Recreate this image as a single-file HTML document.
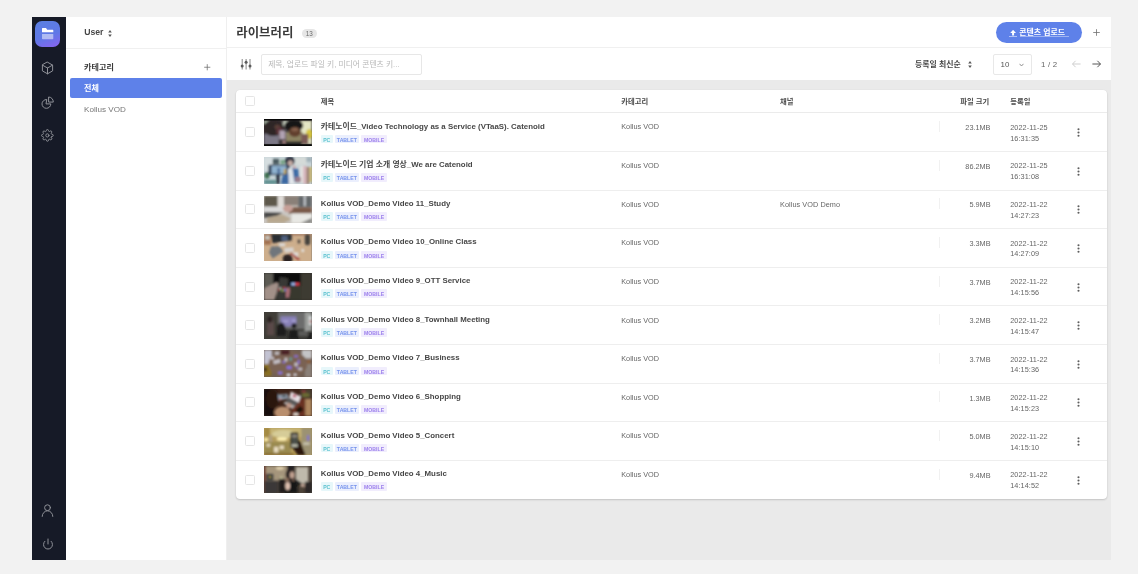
<!DOCTYPE html>
<html lang="ko">
<head>
<meta charset="utf-8">
<title>라이브러리</title>
<style>
*{box-sizing:border-box;margin:0;padding:0}
html,body{width:1138px;height:574px;overflow:hidden;background:#f2f2f2}
body{font-family:"Liberation Sans","Noto Sans CJK KR",sans-serif;color:#333;position:relative;font-size:7.3px;line-height:1}
.app{position:absolute;left:32px;top:17px;width:1079px;height:542.5px;background:#fff;overflow:hidden;will-change:transform}
/* dark icon rail */
.rail{position:absolute;left:0;top:0;width:33.5px;height:100%;background:#161a27}
.rail .on{position:absolute;left:3px;top:4.25px;width:25.3px;height:25.3px;border-radius:7px;background:linear-gradient(160deg,#5b80e2 0%,#5f78e6 55%,#8a63f0 100%)}
.rail svg{position:absolute;overflow:visible}
/* category side panel */
.side{position:absolute;left:33.5px;top:0;width:161.5px;height:100%;background:#fff;border-right:1px solid #efefef}
.side .user{position:absolute;left:18.7px;top:11.1px;font-size:8.7px;font-weight:bold;color:#484848;white-space:nowrap}
.side .user i{font-style:normal;display:inline-block;width:5px}
.side .hr{position:absolute;left:0;top:30.5px;width:100%;height:1px;background:#f0f0f0}
.side .cat{position:absolute;left:0;top:0;width:0;height:0}
.side .plus{position:absolute;left:138.5px;top:47px;width:6.5px;height:6.5px}
.side .sel{position:absolute;left:4.75px;top:60.6px;width:152px;height:20.5px;border-radius:2px;background:#5e81e9}
.side .item{position:absolute;left:18.5px;top:88.75px;font-size:8.1px;color:#777;white-space:nowrap}
.ud{position:absolute;width:4px;height:7px}
.hg{position:absolute;display:block;overflow:visible}
.tx{position:absolute;display:block;white-space:nowrap;line-height:1;font-family:"Liberation Sans","Noto Sans CJK KR",sans-serif}
/* main */
.main{position:absolute;left:195px;top:0;width:884px;height:100%;background:#eaeaea}
.head{position:absolute;left:0;top:0;width:100%;height:31px;background:#fff;border-bottom:1px solid #f0f0f0}
.head h1{position:absolute;left:0;top:0;width:0;height:0;font-size:12.4px}
.head .cnt{position:absolute;left:74.5px;top:11.75px;width:15.5px;height:9.25px;border-radius:5px;background:#e6e6e6;color:#6a6a6a;font-size:6.3px;text-align:center;line-height:9.6px}
.head .up{position:absolute;left:768.75px;top:5.25px;width:86.5px;height:20.75px;border-radius:10.5px;background:#5e81e9;color:#fff;font-size:7.9px;font-weight:bold;white-space:nowrap;overflow:hidden}
.head .up>svg:first-child{position:absolute;left:13.05px;top:7.35px;width:8.2px;height:7.6px}
.head .up i{position:absolute;left:23.8px;top:13.5px;width:49.5px;height:.6px;background:rgba(255,255,255,.4)}
.head .add{position:absolute;left:866px;top:12px;width:7px;height:7px}
.tool{position:absolute;left:0;top:31px;width:100%;height:31.5px;background:#fff}
.tool .flt{position:absolute;left:14px;top:11.1px;width:11px;height:11px;overflow:visible}
.tool .q{position:absolute;left:34.25px;top:6.25px;width:160.5px;height:20.25px;border:1px solid #e7e7e7;border-radius:2px;overflow:hidden}
.tool .sort{position:absolute;left:0;top:0;width:0;height:0}
.tool .pp{position:absolute;left:766px;top:6.25px;width:39px;height:20.25px;border:1px solid #e8e8e8;border-radius:2px;color:#555;font-size:7.6px;padding:6.1px 0 0 6.5px;font-size:7.9px}
.tool .pp svg{position:absolute;left:25px;top:8px;width:5px;height:4px}
.tool .pg{position:absolute;left:814px;top:12.5px;font-size:7.9px;color:#666;white-space:nowrap;letter-spacing:.2px}
.tool .ar{position:absolute;top:12.4px;width:9px;height:8px}
/* table card */
.card{position:absolute;left:9px;top:72.75px;width:870.75px;height:409.25px;background:#fff;border-radius:4px;box-shadow:0 1px 2px rgba(0,0,0,.16),0 0 1px rgba(0,0,0,.08);overflow:hidden}
.th{position:relative;height:23.5px;border-bottom:1px solid #ebebeb;font-weight:bold;color:#444;font-size:7.3px}
.th span{position:absolute;top:7.1px;white-space:nowrap}
.cb{position:absolute;left:9px;width:10px;height:10px;border:1px solid #e5e5e5;border-radius:1.5px;background:#fff}
.row{position:relative;height:38.64px;border-bottom:1px solid #eee}
.row:last-child{border-bottom:0}
.row .cb{top:13.8px}
.row .tn{position:absolute;left:28.25px;top:5.35px;width:47.75px;height:27px;overflow:hidden;background:#555}
.row .tn svg{display:block;width:47.75px;height:27px}
.row .t{position:absolute;left:84.75px;top:9.35px;font-size:7.87px;font-weight:bold;color:#474747;white-space:nowrap}
.row .tags{position:absolute;left:84.75px;top:21.6px;height:8.6px;white-space:nowrap;font-size:0}
.row .tags b{display:inline-block;height:8.6px;line-height:10.5px;font-size:5.2px;text-align:center;overflow:hidden;margin-right:2.2px;border-radius:1px;vertical-align:top}
.pc{width:12px;background:#e7f7fa;color:#5cc2cf}.tb{width:23.9px;background:#ebeffd;color:#7693ec}.mb{width:26px;background:#f1edfd;color:#9b7fec}
.row .c{position:absolute;left:385.25px;top:10.2px;color:#666;white-space:nowrap}
.row .ch{position:absolute;left:544px;top:10.2px;color:#666;white-space:nowrap;letter-spacing:.06px}
.row .sp{position:absolute;left:702.5px;top:7.75px;width:1px;height:11px;background:#f1f1f1}
.row .sz{position:absolute;right:116.25px;top:10.9px;color:#666;white-space:nowrap}
.row .d{position:absolute;left:774.25px;top:11.3px;color:#666;white-space:nowrap;line-height:10.75px;margin-top:-1.7px;letter-spacing:.06px}
.row .k{position:absolute;left:840.6px;top:14.8px;width:3px;height:9px}
</style>
</head>
<body>
<svg width="0" height="0" style="position:absolute"><defs><filter id="bl" x="-20%" y="-20%" width="140%" height="140%"><feGaussianBlur stdDeviation="1"/></filter></defs></svg>
<div class="app">
  <div class="rail">
    <div class="on"></div>
    <svg style="left:9.9px;top:11.1px" width="11.3" height="11.2" viewBox="0 0 11.3 11.2"><path d="M0 .6 Q0 0 .6 0 H4 L5.2 1.7 H10.7 Q11.3 1.7 11.3 2.3 V4.3 H0Z" fill="#fff"/><path d="M0 6.1 H11.3 V10.5 Q11.3 11.2 10.6 11.2 H.7 Q0 11.2 0 10.5Z" fill="#fff" fill-opacity=".5"/></svg>
    <svg style="left:9.2px;top:43.9px" width="13" height="14" viewBox="-6.5 -7 13 14" stroke="#8f9198" fill="none" stroke-linecap="round" stroke-linejoin="round" stroke-width="1"><path d="M0 -5.8 L5.1 -2.9 V2.9 L0 5.8 L-5.1 2.9 V-2.9Z M-5.1 -2.9 L0 0 L5.1 -2.9 M0 0 V5.8"/></svg>
    <svg style="left:8px;top:78px" width="16" height="16" viewBox="0 0 16 16" stroke="#8f9198" fill="none" stroke-linecap="round" stroke-linejoin="round" stroke-width="1"><path d="M6.4 4.5 A4.4 4.4 0 1 0 10.8 8.9 H6.4Z"/><path d="M8.6 6.7 V2 A4.7 4.7 0 0 1 13.3 6.7Z"/></svg>
    <svg style="left:9.4px;top:112.3px" width="12.8" height="12.8" viewBox="0 0 24 24" stroke="#8f9198" fill="none" stroke-linecap="round" stroke-linejoin="round" stroke-width="1.8"><circle cx="12" cy="12" r="3"/><path d="M19.4 15a1.65 1.65 0 0 0 .33 1.82l.06.06a2 2 0 0 1 0 2.83 2 2 0 0 1-2.83 0l-.06-.06a1.65 1.65 0 0 0-1.82-.33 1.65 1.65 0 0 0-1 1.51V21a2 2 0 0 1-2 2 2 2 0 0 1-2-2v-.09A1.65 1.65 0 0 0 9 19.4a1.65 1.65 0 0 0-1.82.33l-.06.06a2 2 0 0 1-2.83 0 2 2 0 0 1 0-2.83l.06-.06a1.65 1.65 0 0 0 .33-1.82 1.65 1.65 0 0 0-1.51-1H3a2 2 0 0 1-2-2 2 2 0 0 1 2-2h.09A1.65 1.65 0 0 0 4.6 9a1.65 1.65 0 0 0-.33-1.82l-.06-.06a2 2 0 0 1 0-2.83 2 2 0 0 1 2.83 0l.06.06a1.65 1.65 0 0 0 1.82.33H9a1.65 1.65 0 0 0 1-1.51V3a2 2 0 0 1 2-2 2 2 0 0 1 2 2v.09a1.65 1.65 0 0 0 1 1.51 1.65 1.65 0 0 0 1.82-.33l.06-.06a2 2 0 0 1 2.83 0 2 2 0 0 1 0 2.83l-.06.06a1.65 1.65 0 0 0-.33 1.82V9a1.65 1.65 0 0 0 1.51 1H21a2 2 0 0 1 2 2 2 2 0 0 1-2 2h-.09a1.65 1.65 0 0 0-1.51 1z"/></svg>
    <svg style="left:9px;top:486.5px" width="13" height="14" viewBox="0 0 13 14" stroke="#8f9198" fill="none" stroke-linecap="round" stroke-linejoin="round" stroke-width="1"><circle cx="6.5" cy="3.7" r="2.9"/><path d="M1.2 12.4 A5.3 5.6 0 0 1 11.8 12.4"/></svg>
    <svg style="left:9.6px;top:520.6px" width="12" height="12" viewBox="0 0 24 24" stroke="#8f9198" fill="none" stroke-linecap="round" stroke-linejoin="round" stroke-width="2"><path d="M18.36 6.64a9 9 0 1 1-12.73 0"/><line x1="12" y1="2" x2="12" y2="12"/></svg>
  </div>
  <div class="side">
    <div class="user">User</div>
    <svg class="ud" style="left:42.5px;top:12.5px" viewBox="0 0 4 7"><path d="M2 0 L3.8 2.6 H.2Z M2 7 L3.8 4.4 H.2Z" fill="#555"/></svg>
    <div class="hr"></div>
    <div class="cat"><span class="tx" style="left:18.6px;top:46.8px;font-size:8.1px;font-weight:bold;color:#3a3a3a">카테고리</span></div>
    <svg class="plus" viewBox="0 0 7 7"><path d="M3.5 .2V6.8M.2 3.5H6.8" stroke="#707070" stroke-width=".85" fill="none"/></svg>
    <div class="sel"><span class="tx" style="left:13.85px;top:6.95px;font-size:8.1px;font-weight:bold;color:#fff">전체</span></div>
    <div class="item">Kollus VOD</div>
  </div>
  <div class="main">
    <div class="head">
      <h1><span class="tx" style="left:9.3px;top:9.95px;font-size:12.4px;font-weight:bold;color:#3a3a3a">라이브러리</span></h1>
      <div class="cnt">13</div>
      <div class="up"><svg viewBox="0 0 8.2 7.6"><path d="M4.1 -.2 L7 3 H5.1 V5.5 H3.1 V3 H1.2Z M0 6.6 H8.2 V7.7 H0Z" fill="#fff"/></svg><span class="tx" style="left:23.6px;top:6.75px;font-size:7.9px;font-weight:bold;color:#fff">콘텐츠 업로드</span><i></i></div>
      <svg class="add" viewBox="0 0 7 7"><path d="M3.5 .2V6.8M.2 3.5H6.8" stroke="#707070" stroke-width=".8" fill="none"/></svg>
    </div>
    <div class="tool">
      <svg class="flt" viewBox="0 0 11 11"><path d="M1.2 0V10.5M5.1 0V10.5M9 0V10.5" stroke="#707070" stroke-width=".85" fill="none"/><g fill="#5a5a5a"><circle cx="1.2" cy="6.9" r="1.5"/><circle cx="5.1" cy="3.3" r="1.5"/><circle cx="9" cy="6.9" r="1.5"/></g></svg>
      <div class="q"><span class="tx" style="left:5.9px;top:6px;font-size:7.8px;color:#b8b8b8">제목, 업로드 파일 키, 미디어 콘텐츠 키...</span></div>
      <div class="sort"><span class="tx" style="left:688.1px;top:13.25px;font-size:7.9px;font-weight:bold;color:#444">등록일 최신순</span></div>
      <svg class="ud" style="left:741px;top:13.2px" viewBox="0 0 4 7"><path d="M2 0 L3.8 2.6 H.2Z M2 7 L3.8 4.4 H.2Z" fill="#555"/></svg>
      <div class="pp">10<svg viewBox="0 0 5 4"><path d="M.5 .8 L2.5 3 L4.5 .8" stroke="#777" stroke-width=".8" fill="none"/></svg></div>
      <div class="pg">1 / 2</div>
      <svg class="ar" style="left:845px" viewBox="0 0 9 8"><path d="M8.6 4H.6M3.6 .8L.5 4L3.6 7.2" stroke="#c9c9c9" stroke-width=".9" fill="none"/></svg>
      <svg class="ar" style="left:864.75px" viewBox="0 0 9 8"><path d="M.4 4H8.4M5.4 .8L8.5 4L5.4 7.2" stroke="#444" stroke-width=".9" fill="none"/></svg>
    </div>
    <div class="card">
      <div class="th">
        <div class="cb" style="top:6px"></div>
        <span style="left:84.75px;top:7.8px;color:#484848">제목</span>
        <span style="left:385.25px;top:7.8px;color:#484848">카테고리</span>
        <span style="left:544px;top:7.8px;color:#484848">채널</span>
        <span style="left:724.3px;top:7.8px;color:#484848">파일 크기</span>
        <span style="left:774.25px;top:7.8px;color:#484848">등록일</span>
      </div>
      <div class="row">
        <div class="cb"></div>
        <div class="tn"><svg viewBox="0 0 48 27" preserveAspectRatio="none"><rect width="48" height="27" fill="#3a3436"/><g filter="url(#bl)"><rect x="0" y="1.5" width="5" height="6" fill="#b9c9b6"/><rect x="19" y="1.5" width="5" height="6" fill="#c8d0c0"/><rect x="37" y="1.5" width="11" height="24" fill="#e4e6c4"/><ellipse cx="45.5" cy="15" rx="3.5" ry="5" fill="#d6c63e"/><rect x="0" y="15" width="15" height="11" fill="#7c7886"/><ellipse cx="9.5" cy="9" rx="10.5" ry="8" fill="#2e2628"/><ellipse cx="13.5" cy="8" rx="3" ry="2.2" fill="#5a4038"/><ellipse cx="15.5" cy="12" rx="3.5" ry="4" fill="#5a3338"/><rect x="15.5" y="11.5" width="6" height="9" fill="#b0a2b2"/><rect x="22" y="13" width="17" height="10" fill="#8d8463"/><rect x="37.5" y="15" width="7" height="10" fill="#7a5a56"/><ellipse cx="30" cy="6.5" rx="9.5" ry="5.5" fill="#191717"/><ellipse cx="31" cy="13" rx="6" ry="5" fill="#62402f"/><ellipse cx="31" cy="10.5" rx="3.5" ry="1.8" fill="#86604c"/><rect x="22" y="22.5" width="16" height="3" fill="#222"/><ellipse cx="20" cy="23" rx="1.6" ry="1.6" fill="#c49494"/></g><rect width="48" height="1.5" fill="#080808"/><rect y="25.2" width="48" height="1.8" fill="#080808"/></svg></div>
        <div class="t">카테노이드_Video Technology as a Service (VTaaS). Catenoid</div>
        <div class="tags"><b class="pc">PC</b><b class="tb">TABLET</b><b class="mb">MOBILE</b></div>
        <div class="c">Kollus VOD</div>
        <div class="ch"></div>
        <div class="sp"></div>
        <div class="sz">23.1MB</div>
        <div class="d">2022-11-25<br>16:31:35</div>
        <svg class="k" viewBox="0 0 3 9"><circle cx="1.5" cy="1.2" r="1.05" fill="#5e5e5e"/><circle cx="1.5" cy="4.5" r="1.05" fill="#5e5e5e"/><circle cx="1.5" cy="7.8" r="1.05" fill="#5e5e5e"/></svg>
      </div>
      <div class="row">
        <div class="cb"></div>
        <div class="tn"><svg viewBox="0 0 48 27" preserveAspectRatio="none"><rect width="48" height="27" fill="#c6d2d6"/><g filter="url(#bl)"><rect x="0" y="0" width="8" height="14" fill="#d6dee0"/><rect x="31" y="0" width="12" height="8" fill="#d4dad8"/><rect x="42.6" y="0" width="5.4" height="5" fill="#a3b2ba"/><rect x="8.8" y="1.9" width="6.2" height="5.3" fill="#4a5a5e"/><ellipse cx="18.8" cy="5" rx="2.5" ry="2.2" fill="#76a384"/><ellipse cx="3" cy="18.5" rx="2.6" ry="3.2" fill="#3f7050"/><rect x="0" y="23" width="12" height="4" fill="#5f9090"/><rect x="4.4" y="7.8" width="21.3" height="10.1" rx="1" fill="#2b3a52"/><rect x="7.5" y="9" width="15" height="7.8" fill="#8fb2cf"/><rect x="13.5" y="11" width="2.5" height="6" fill="#4a6a98"/><rect x="20" y="12" width="2" height="5" fill="#c8a848"/><rect x="12.5" y="17.5" width="3" height="9.5" fill="#1a2030"/><ellipse cx="26" cy="4" rx="5" ry="4.5" fill="#2a3040"/><ellipse cx="26.5" cy="6" rx="2.5" ry="2.7" fill="#c4aaa2"/><rect x="24" y="11.5" width="7" height="15.5" fill="#e2e6ea"/><path d="M17 27 L18.5 19 L24.5 16.5 L25 27Z" fill="#3a68a2"/><path d="M28.5 11 L34.5 12 L35.5 24 L30.5 25Z" fill="#3d6ca6"/><ellipse cx="30.5" cy="10" rx="1.5" ry="1.5" fill="#d0a8a8"/><rect x="36.5" y="9" width="3" height="17" fill="#e6e2e0"/><rect x="39.5" y="9" width="3.2" height="18" fill="#d8b4ba"/><rect x="42.8" y="10" width="2.6" height="17" fill="#9a7c66"/><rect x="46" y="10" width="2" height="15" fill="#c9b056"/><rect x="31" y="20" width="6" height="5" fill="#9a7a88"/></g></svg></div>
        <div class="t">카테노이드 기업 소개 영상_We are Catenoid</div>
        <div class="tags"><b class="pc">PC</b><b class="tb">TABLET</b><b class="mb">MOBILE</b></div>
        <div class="c">Kollus VOD</div>
        <div class="ch"></div>
        <div class="sp"></div>
        <div class="sz">86.2MB</div>
        <div class="d">2022-11-25<br>16:31:08</div>
        <svg class="k" viewBox="0 0 3 9"><circle cx="1.5" cy="1.2" r="1.05" fill="#5e5e5e"/><circle cx="1.5" cy="4.5" r="1.05" fill="#5e5e5e"/><circle cx="1.5" cy="7.8" r="1.05" fill="#5e5e5e"/></svg>
      </div>
      <div class="row">
        <div class="cb"></div>
        <div class="tn"><svg viewBox="0 0 48 27" preserveAspectRatio="none"><rect width="48" height="27" fill="#c9c5c0"/><g filter="url(#bl)"><rect x="0" y="0" width="13.8" height="10.7" fill="#5d584c"/><rect x="13.8" y="0" width="6.5" height="14" fill="#e0dcd8"/><rect x="20" y="0" width="14.5" height="9.4" fill="#8a8078"/><rect x="34.5" y="0" width="13.5" height="11" fill="#63676b"/><rect x="40" y="0" width="2" height="10" fill="#c8ccd0"/><rect x="0" y="10.7" width="20" height="5.6" fill="#dadada"/><rect x="25" y="11.3" width="23" height="6.2" fill="#7a5a48"/><ellipse cx="24" cy="12.5" rx="5" ry="3.5" fill="#c8a098"/><path d="M0 16 L19 16.5 L13 20 L0 22Z" fill="#4a4a48"/><path d="M3 22 L18 18.5 L27.6 23 L20 27 L3 27Z" fill="#b8a890"/><rect x="27.6" y="17.5" width="20.4" height="9.5" fill="#e8e8e4"/><path d="M37 27 L48 22 L48 27Z" fill="#858583"/></g></svg></div>
        <div class="t">Kollus VOD_Demo Video 11_Study</div>
        <div class="tags"><b class="pc">PC</b><b class="tb">TABLET</b><b class="mb">MOBILE</b></div>
        <div class="c">Kollus VOD</div>
        <div class="ch">Kollus VOD Demo</div>
        <div class="sp"></div>
        <div class="sz">5.9MB</div>
        <div class="d">2022-11-22<br>14:27:23</div>
        <svg class="k" viewBox="0 0 3 9"><circle cx="1.5" cy="1.2" r="1.05" fill="#5e5e5e"/><circle cx="1.5" cy="4.5" r="1.05" fill="#5e5e5e"/><circle cx="1.5" cy="7.8" r="1.05" fill="#5e5e5e"/></svg>
      </div>
      <div class="row">
        <div class="cb"></div>
        <div class="tn"><svg viewBox="0 0 48 27" preserveAspectRatio="none"><rect width="48" height="27" fill="#cdae8c"/><g filter="url(#bl)"><rect x="0" y="0" width="48" height="1.2" fill="#8a6050"/><rect x="0" y="1.3" width="6.9" height="9.4" fill="#a07050"/><rect x="1.3" y="1.9" width="4.4" height="3.8" fill="#c8c8c0"/><path d="M6.9 0 L27.9 0 L27.9 6.5 L8.5 9.3Z" fill="#2a2e30"/><rect x="17.5" y="1.9" width="6.3" height="5" fill="#506080"/><rect x="15" y="9.4" width="6.3" height="2.8" fill="#dcdcdc"/><path d="M7.2 12.5 L15.4 12.2 L19.4 17.6 L8.8 24.5 L5 18.8Z" fill="#70767c"/><path d="M20 14 L29.5 13.2 L30 17.5 L21 18.8Z" fill="#d8d4d0"/><rect x="28.8" y="18.2" width="5.7" height="4.4" fill="#e0dcd8"/><path d="M25.7 19 L27.5 18.5 L36.4 25.2 L34 26Z" fill="#a03030"/><ellipse cx="23.8" cy="25" rx="5" ry="4.8" fill="#2a2020"/><rect x="41" y="0.3" width="5.4" height="11" rx="2.4" fill="#45423e"/><rect x="33.9" y="5.6" width="2.5" height="3.8" fill="#504840"/><ellipse cx="39" cy="16.5" rx="1.4" ry="1.8" fill="#e4e4e4"/></g></svg></div>
        <div class="t">Kollus VOD_Demo Video 10_Online Class</div>
        <div class="tags"><b class="pc">PC</b><b class="tb">TABLET</b><b class="mb">MOBILE</b></div>
        <div class="c">Kollus VOD</div>
        <div class="ch"></div>
        <div class="sp"></div>
        <div class="sz">3.3MB</div>
        <div class="d">2022-11-22<br>14:27:09</div>
        <svg class="k" viewBox="0 0 3 9"><circle cx="1.5" cy="1.2" r="1.05" fill="#5e5e5e"/><circle cx="1.5" cy="4.5" r="1.05" fill="#5e5e5e"/><circle cx="1.5" cy="7.8" r="1.05" fill="#5e5e5e"/></svg>
      </div>
      <div class="row">
        <div class="cb"></div>
        <div class="tn"><svg viewBox="0 0 48 27" preserveAspectRatio="none"><rect width="48" height="27" fill="#2c2c28"/><g filter="url(#bl)"><rect x="0" y="0" width="9.4" height="16" fill="#5c5a52"/><rect x="37" y="0" width="11" height="27" fill="#3c3a31"/><rect x="9.4" y="0" width="27.6" height="12.8" fill="#090909"/><rect x="25" y="12.8" width="12" height="14.2" fill="#38382f"/><rect x="27.3" y="9.7" width="4" height="2.8" fill="#6a98e8"/><rect x="28" y="10.3" width="2.4" height="1.4" fill="#d0e0ff"/><rect x="31.3" y="9.7" width="4.4" height="2.8" fill="#e04050"/><path d="M0 15.5 L12.5 9.3 L15 11 L12.5 21 L10.5 27 L0 27Z" fill="#a29088"/><path d="M16 4 L24.5 5.5 L22.5 27 L13 27 L14 14Z" fill="#393936"/><rect x="15.2" y="14.4" width="2" height="1.8" fill="#cfc8c0"/><rect x="14.2" y="15.8" width="1.6" height="2" fill="#c03040"/><rect x="16.4" y="16.2" width="1.8" height="2" fill="#40a060"/><rect x="18.5" y="16.5" width="1.6" height="2" fill="#c8b030"/><rect x="20.2" y="15.8" width="2" height="2.3" fill="#3070d0"/><rect x="19" y="14.2" width="2.4" height="1.5" fill="#d04050"/><path d="M22 15 L26 14.5 L26 19 L25 24.8 L22 24.8Z" fill="#a86c74"/></g></svg></div>
        <div class="t">Kollus VOD_Demo Video 9_OTT Service</div>
        <div class="tags"><b class="pc">PC</b><b class="tb">TABLET</b><b class="mb">MOBILE</b></div>
        <div class="c">Kollus VOD</div>
        <div class="ch"></div>
        <div class="sp"></div>
        <div class="sz">3.7MB</div>
        <div class="d">2022-11-22<br>14:15:56</div>
        <svg class="k" viewBox="0 0 3 9"><circle cx="1.5" cy="1.2" r="1.05" fill="#5e5e5e"/><circle cx="1.5" cy="4.5" r="1.05" fill="#5e5e5e"/><circle cx="1.5" cy="7.8" r="1.05" fill="#5e5e5e"/></svg>
      </div>
      <div class="row">
        <div class="cb"></div>
        <div class="tn"><svg viewBox="0 0 48 27" preserveAspectRatio="none"><rect width="48" height="27" fill="#3c3c38"/><g filter="url(#bl)"><rect x="13.8" y="0" width="27" height="17" fill="#6c6c6c"/><rect x="0" y="0" width="13.8" height="27" fill="#403e38"/><rect x="16.6" y="4.4" width="16" height="10" fill="#8880b8"/><rect x="19" y="8.5" width="5.6" height="1.6" fill="#aaa4d6"/><rect x="28" y="7.8" width="4" height="1.8" fill="#aaa4d6"/><rect x="40.8" y="0" width="7.2" height="19" fill="#9a9c9a"/><rect x="45" y="4" width="3" height="9" fill="#d8dcdc"/><rect x="46" y="8" width="2" height="3" fill="#c08888"/><path d="M3 23 L3.5 8 Q6 3 8.5 6 L10 12 L10 23Z" fill="#5a4a48"/><ellipse cx="5.8" cy="7.5" rx="2.6" ry="3.2" fill="#2a2424"/><path d="M12.5 24 L13 14 Q17 8 20 12 L22.5 18 L22 24Z" fill="#1e1c1c"/><circle cx="30.2" cy="13.8" r="2.6" fill="#1e1c1c"/><path d="M24.5 27 L25.5 19 Q30 15.5 34 19 L35 27Z" fill="#1e1c1c"/><rect x="34.5" y="19" width="9.4" height="5" fill="#5a5a58"/><path d="M42.6 27 L47 20 L48 20 L48 27Z" fill="#1a1a1a"/></g></svg></div>
        <div class="t">Kollus VOD_Demo Video 8_Townhall Meeting</div>
        <div class="tags"><b class="pc">PC</b><b class="tb">TABLET</b><b class="mb">MOBILE</b></div>
        <div class="c">Kollus VOD</div>
        <div class="ch"></div>
        <div class="sp"></div>
        <div class="sz">3.2MB</div>
        <div class="d">2022-11-22<br>14:15:47</div>
        <svg class="k" viewBox="0 0 3 9"><circle cx="1.5" cy="1.2" r="1.05" fill="#5e5e5e"/><circle cx="1.5" cy="4.5" r="1.05" fill="#5e5e5e"/><circle cx="1.5" cy="7.8" r="1.05" fill="#5e5e5e"/></svg>
      </div>
      <div class="row">
        <div class="cb"></div>
        <div class="tn"><svg viewBox="0 0 48 27" preserveAspectRatio="none"><rect width="48" height="27" fill="#705f54"/><g filter="url(#bl)"><rect x="0" y="0" width="8" height="14" fill="#c2c2d2"/><rect x="38" y="0" width="10" height="8.5" fill="#c4c4c6"/><rect x="41" y="14" width="7" height="13" fill="#8a8078"/><rect x="0" y="14" width="7.5" height="12" fill="#8a7020"/><ellipse cx="1.5" cy="19.5" rx="1.5" ry="2.3" fill="#3a2a1a"/><ellipse cx="24" cy="14" rx="19.5" ry="13.5" fill="#7a6252"/><rect x="17" y="0" width="8.7" height="4.7" fill="#4a2028"/><rect x="9.4" y="9.7" width="7" height="3.8" fill="#c4c0c6" transform="rotate(-15 13 11.5)"/><rect x="6.3" y="7" width="3.8" height="2.5" fill="#c4c0c6"/><rect x="20.7" y="7.8" width="2.8" height="3.8" fill="#c4c0c6"/><rect x="30.6" y="12.6" width="3.2" height="3.6" fill="#c4c0c6"/><rect x="34.5" y="17.8" width="3.8" height="2.6" fill="#c4c0c6"/><rect x="10.7" y="1.6" width="4.4" height="3" fill="#c4c0c6"/><rect x="30.3" y="5.4" width="3.8" height="1.8" fill="#8a70dc"/><rect x="18.8" y="11" width="2.2" height="2.2" fill="#8a70dc"/><rect x="33.9" y="9.7" width="1.9" height="4.3" fill="#8a70dc"/><rect x="22.8" y="16" width="5" height="3" fill="#8a70dc"/><rect x="14.3" y="21.6" width="4" height="2.5" fill="#8a70dc"/><rect x="32.6" y="16.6" width="1.9" height="1.9" fill="#8a70dc"/><rect x="25.7" y="7.5" width="2.2" height="3.2" fill="#60a0a0"/><ellipse cx="45" cy="11.5" rx="2" ry="2.6" fill="#8a6040"/><rect x="23" y="24" width="3.2" height="2" fill="#e0e0e8"/><rect x="30" y="23.8" width="2.6" height="2" fill="#e0e0e8"/></g></svg></div>
        <div class="t">Kollus VOD_Demo Video 7_Business</div>
        <div class="tags"><b class="pc">PC</b><b class="tb">TABLET</b><b class="mb">MOBILE</b></div>
        <div class="c">Kollus VOD</div>
        <div class="ch"></div>
        <div class="sp"></div>
        <div class="sz">3.7MB</div>
        <div class="d">2022-11-22<br>14:15:36</div>
        <svg class="k" viewBox="0 0 3 9"><circle cx="1.5" cy="1.2" r="1.05" fill="#5e5e5e"/><circle cx="1.5" cy="4.5" r="1.05" fill="#5e5e5e"/><circle cx="1.5" cy="7.8" r="1.05" fill="#5e5e5e"/></svg>
      </div>
      <div class="row">
        <div class="cb"></div>
        <div class="tn"><svg viewBox="0 0 48 27" preserveAspectRatio="none"><rect width="48" height="27" fill="#3c2218"/><g filter="url(#bl)"><rect x="0" y="0" width="10" height="27" fill="#140b09"/><ellipse cx="8.5" cy="10" rx="6.5" ry="10" fill="#2a1510"/><rect x="36.4" y="0" width="11.6" height="9.4" fill="#4a4030"/><ellipse cx="42" cy="6" rx="4" ry="2" fill="#6a6a30"/><ellipse cx="40" cy="2.5" rx="2" ry="1.2" fill="#8a3038"/><rect x="27.6" y="9.4" width="14" height="17.6" fill="#6a3020"/><rect x="41.5" y="10" width="6.5" height="17" fill="#ae8860"/><path d="M13.8 5.6 L23.8 4.7 L24.8 9.4 L14.7 11.6Z" fill="#8a98a8"/><rect x="18" y="6" width="4.4" height="1.9" fill="#4a4a48"/><rect x="15" y="9.7" width="2.5" height="1.3" fill="#d09098"/><path d="M27 2.5 L37 7.5 L34.7 13.8 L25.4 8.8Z" fill="#e6e2e6"/><rect x="28.8" y="5.3" width="3.8" height="3.1" fill="#c07080"/><path d="M25.7 8.8 L34.5 13.5 L31.3 16.9 L21.3 12.8Z" fill="#5a5a5a"/><path d="M21.3 12.8 L31.3 16.9 L27.9 19.7 L19.4 14.1Z" fill="#b2b2b2"/><ellipse cx="25" cy="16.5" rx="2.6" ry="2.6" fill="#c09888"/><ellipse cx="18.5" cy="23.5" rx="8" ry="6" fill="#b98f6e"/><rect x="32.6" y="18.2" width="6.3" height="5" fill="#1a1210" transform="rotate(-35 35.7 20.7)"/><rect x="29.5" y="24" width="5" height="3" fill="#d8d0c8"/></g></svg></div>
        <div class="t">Kollus VOD_Demo Video 6_Shopping</div>
        <div class="tags"><b class="pc">PC</b><b class="tb">TABLET</b><b class="mb">MOBILE</b></div>
        <div class="c">Kollus VOD</div>
        <div class="ch"></div>
        <div class="sp"></div>
        <div class="sz">1.3MB</div>
        <div class="d">2022-11-22<br>14:15:23</div>
        <svg class="k" viewBox="0 0 3 9"><circle cx="1.5" cy="1.2" r="1.05" fill="#5e5e5e"/><circle cx="1.5" cy="4.5" r="1.05" fill="#5e5e5e"/><circle cx="1.5" cy="7.8" r="1.05" fill="#5e5e5e"/></svg>
      </div>
      <div class="row">
        <div class="cb"></div>
        <div class="tn"><svg viewBox="0 0 48 27" preserveAspectRatio="none"><rect width="48" height="27" fill="#b49c5c"/><g filter="url(#bl)"><rect x="0" y="0" width="48" height="9" fill="#c4b272"/><ellipse cx="20" cy="6" rx="12" ry="4" fill="#d6cc98"/><rect x="0" y="0" width="6" height="9" fill="#a48a42"/><rect x="0" y="13.8" width="27" height="13.2" fill="#9a8a50"/><rect x="37.6" y="0" width="10.4" height="27" fill="#9c9272"/><ellipse cx="18" cy="11" rx="5.5" ry="1.8" fill="#fff2b4"/><ellipse cx="2" cy="11.6" rx="2.2" ry="1.8" fill="#fff0b0"/><rect x="5" y="6.9" width="3.2" height="7" fill="#b0a080"/><rect x="10" y="18.8" width="4.4" height="5.7" fill="#e8dcc0"/><rect x="15.7" y="17.5" width="4.3" height="3.8" fill="#e8dcc0"/><rect x="2.5" y="15.7" width="3.8" height="3.1" fill="#e0d4b8"/><rect x="43.2" y="7.2" width="2.3" height="5.6" fill="#8474c6"/><rect x="39.5" y="14.4" width="6.3" height="2.5" fill="#c8c4b0"/><path d="M33.2 12.5 L36.4 13.2 L40 22.6 L42 27 L33.9 27 L28.8 20Z" fill="#2a1810"/><rect x="26.6" y="4.4" width="7.9" height="15.6" rx="1" fill="#1a1510"/><rect x="27.6" y="6" width="6.3" height="12.8" fill="#4c504a"/><rect x="27.6" y="16.3" width="6.3" height="2.5" fill="#c0c0b0"/><rect x="28" y="6.5" width="5.5" height="3" fill="#8a8478"/><rect x="0" y="25.5" width="30" height="1.5" fill="#7a5a20"/></g></svg></div>
        <div class="t">Kollus VOD_Demo Video 5_Concert</div>
        <div class="tags"><b class="pc">PC</b><b class="tb">TABLET</b><b class="mb">MOBILE</b></div>
        <div class="c">Kollus VOD</div>
        <div class="ch"></div>
        <div class="sp"></div>
        <div class="sz">5.0MB</div>
        <div class="d">2022-11-22<br>14:15:10</div>
        <svg class="k" viewBox="0 0 3 9"><circle cx="1.5" cy="1.2" r="1.05" fill="#5e5e5e"/><circle cx="1.5" cy="4.5" r="1.05" fill="#5e5e5e"/><circle cx="1.5" cy="7.8" r="1.05" fill="#5e5e5e"/></svg>
      </div>
      <div class="row">
        <div class="cb"></div>
        <div class="tn"><svg viewBox="0 0 48 27" preserveAspectRatio="none"><rect width="48" height="27" fill="#4c4238"/><g filter="url(#bl)"><rect x="0.6" y="0" width="22.6" height="14.7" fill="#a5957c"/><ellipse cx="16" cy="2" rx="4" ry="2" fill="#dacaa8"/><rect x="0" y="0" width="2" height="27" fill="#7a4030"/><rect x="32" y="0.9" width="12.5" height="16.6" fill="#bfb9ab"/><rect x="23.2" y="0" width="7.5" height="2.8" fill="#1a1a20"/><rect x="2.5" y="7.8" width="6.9" height="6.3" fill="#2a3038"/><ellipse cx="6" cy="11" rx="1.5" ry="1.2" fill="#a09040"/><rect x="0.6" y="14.7" width="13.2" height="12.3" fill="#3a3838"/><rect x="15" y="12.9" width="6.3" height="14.1" fill="#201c1c"/><ellipse cx="17.3" cy="11.5" rx="1" ry="1.5" fill="#c0c098"/><ellipse cx="26.5" cy="8.5" rx="4.8" ry="6.3" fill="#2a2220"/><ellipse cx="28.3" cy="9" rx="2.5" ry="3.6" fill="#c0a090"/><rect x="22" y="12" width="3" height="12" fill="#8a6a58"/><rect x="28.8" y="13" width="2.5" height="13" fill="#8a6a58"/><path d="M20.7 27 L22 16 L33 15 L34 27Z" fill="#151515"/><path d="M30.7 12.2 L37.6 17 L36.5 20 L30 17Z" fill="#1a1a1a"/><ellipse cx="23.8" cy="20" rx="2.4" ry="4" fill="#e0c0b0"/><ellipse cx="38.9" cy="19.4" rx="1.9" ry="1.5" fill="#d0b0a0"/><rect x="41.4" y="15.7" width="6.6" height="11.3" fill="#2a2828"/></g></svg></div>
        <div class="t">Kollus VOD_Demo Video 4_Music</div>
        <div class="tags"><b class="pc">PC</b><b class="tb">TABLET</b><b class="mb">MOBILE</b></div>
        <div class="c">Kollus VOD</div>
        <div class="ch"></div>
        <div class="sp"></div>
        <div class="sz">9.4MB</div>
        <div class="d">2022-11-22<br>14:14:52</div>
        <svg class="k" viewBox="0 0 3 9"><circle cx="1.5" cy="1.2" r="1.05" fill="#5e5e5e"/><circle cx="1.5" cy="4.5" r="1.05" fill="#5e5e5e"/><circle cx="1.5" cy="7.8" r="1.05" fill="#5e5e5e"/></svg>
      </div>
    </div>
  </div>
</div>
</body>
</html>
